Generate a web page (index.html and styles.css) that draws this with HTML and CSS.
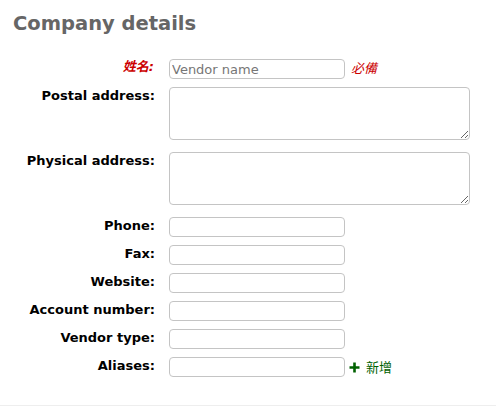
FILE: index.html
```html
<!DOCTYPE html>
<html lang="zh-Hant">
<head>
<meta charset="utf-8">
<title>Company details</title>
<link rel="stylesheet" href="styles.css">
</head>
<body>
<div class="page">
  <h2 class="title">Company details</h2>
  <ol class="rows">
    <li class="row">
      <label class="label required" for="company">姓名:</label>
      <input class="field" id="company" type="text" placeholder="Vendor name">
      <span class="req">必備</span>
    </li>
    <li class="row row-area">
      <label class="label" for="postal">Postal address:</label>
      <textarea class="area" id="postal"></textarea>
    </li>
    <li class="row row-area">
      <label class="label" for="physical">Physical address:</label>
      <textarea class="area" id="physical"></textarea>
    </li>
    <li class="row">
      <label class="label" for="phone">Phone:</label>
      <input class="field" id="phone" type="text">
    </li>
    <li class="row">
      <label class="label" for="fax">Fax:</label>
      <input class="field" id="fax" type="text">
    </li>
    <li class="row">
      <label class="label" for="website">Website:</label>
      <input class="field" id="website" type="text">
    </li>
    <li class="row">
      <label class="label" for="account">Account number:</label>
      <input class="field" id="account" type="text">
    </li>
    <li class="row">
      <label class="label" for="vtype">Vendor type:</label>
      <input class="field" id="vtype" type="text">
    </li>
    <li class="row">
      <label class="label" for="aliases">Aliases:</label>
      <input class="field" id="aliases" type="text">
      <a class="add" href="#"><svg class="plus" width="11" height="11" viewBox="0 0 11 11" aria-hidden="true"><path d="M5.5 0.5V10.5M0.5 5.5H10.5" stroke="#006100" stroke-width="2.6" fill="none"/></svg><span class="add-text">新增</span></a>
    </li>
  </ol>
</div>
</body>
</html>
```

FILE: styles.css
```css
html, body {
  margin: 0;
  padding: 0;
  background: #fff;
}

body {
  font-family: "DejaVu Sans", "Noto Sans CJK TC", sans-serif;
  font-size: 13px;
  color: #000;
}

.page {
  height: 405px;
  border-bottom: 1px solid #eeeeee;
  overflow: hidden;
}

.title {
  margin: 12px 0 24.3px 13px;
  font-size: 19.5px;
  font-weight: bold;
  color: #666666;
}

.rows {
  list-style: none;
  margin: 0;
  padding: 0;
}

.row {
  display: flex;
  align-items: flex-start;
  margin-bottom: 7.9px;
}

.row-area {
  margin-bottom: 12px;
}

.label {
  flex: 0 0 169px;
  box-sizing: border-box;
  padding-right: 14px;
  padding-top: 1px;
  text-align: right;
  font-weight: bold;
  line-height: 15px;
}

.required {
  color: #cc0000;
  font-style: italic;
  padding-right: 15px;
  padding-top: 0;
  line-height: 16px;
}

.field {
  box-sizing: border-box;
  width: 176px;
  height: 20px;
  margin: 0;
  padding: 1px 2px;
  border: 1px solid #c4c4c4;
  border-radius: 4px;
  font-family: "DejaVu Sans", sans-serif;
  font-size: 13px;
  background: #fff;
  outline: none;
}

.field::placeholder {
  color: #767676;
}

.area {
  box-sizing: border-box;
  width: 301px;
  height: 53px;
  margin: 0;
  padding: 2px;
  border: 1px solid #c4c4c4;
  border-radius: 4px;
  font-family: "DejaVu Sans", sans-serif;
  font-size: 13px;
  background: #fff;
}

.req {
  margin-left: 6px;
  color: #cc0000;
  font-style: italic;
  line-height: 20px;
}

.add {
  display: flex;
  align-items: center;
  margin-left: 4px;
  height: 20px;
  padding-top: 1px;
  text-decoration: none;
  color: #006100;
}

.plus {
  display: block;
}

.add-text {
  margin-left: 6px;
  line-height: 20px;
}
```
